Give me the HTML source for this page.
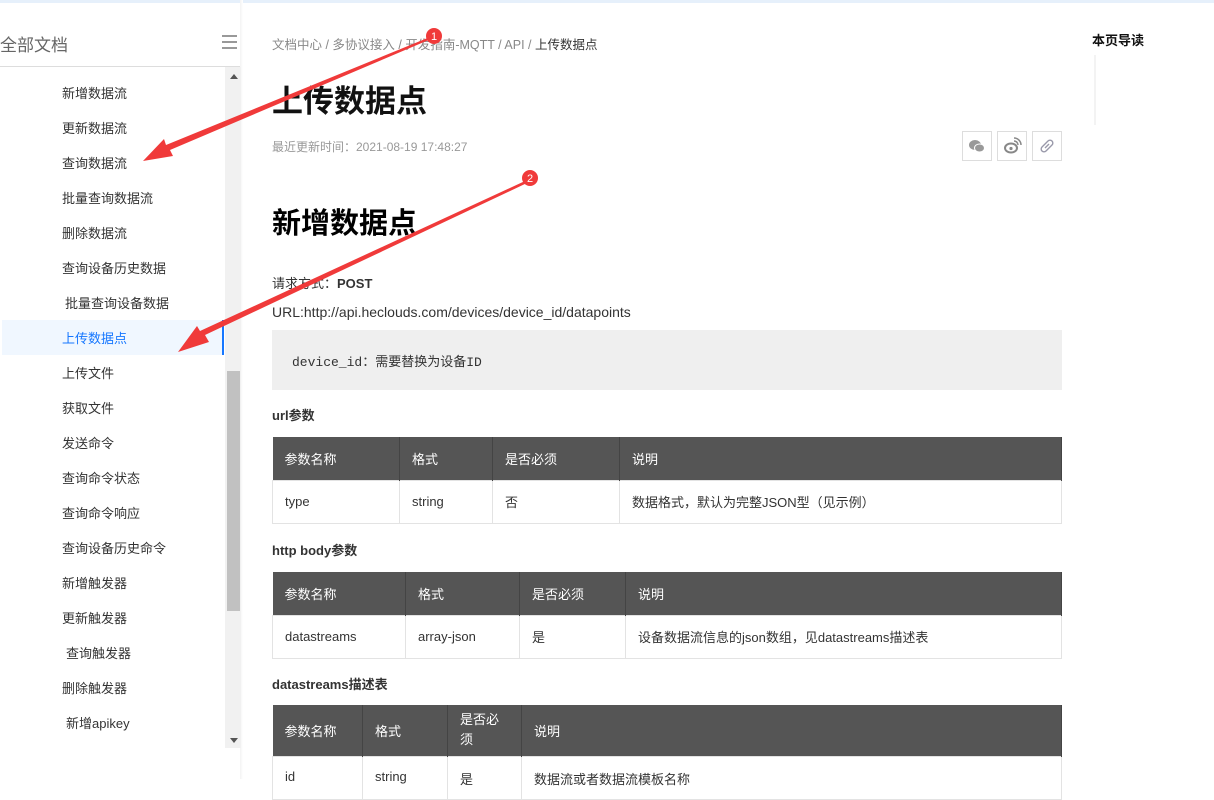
<!DOCTYPE html>
<html><head><meta charset="utf-8"><style>
*{margin:0;padding:0;box-sizing:border-box}
body{width:1214px;height:779px;overflow:hidden;background:#fff;font-family:"Liberation Sans","Noto Sans CJK SC",sans-serif;position:relative;color:#333}
.a{position:absolute;white-space:nowrap}
.nav{font-size:13px;color:#333}
table{position:absolute;border-collapse:collapse;font-size:13px;left:272px;width:790px}
th{background:#555;color:#fff;font-weight:normal;text-align:left;padding-left:12px;border-right:1px solid #444}
td{padding-left:12px;border:1px solid #e3e3e3;color:#333}
.ic{position:absolute;top:131px;width:30px;height:30px;border:1px solid #ddd;background:#fff}
</style></head><body>
<div class="a" style="left:0;top:0;width:1214px;height:3px;background:#e6f0fb"></div>
<div class="a" style="left:0;top:31px;font-size:17px;color:#666">全部文档</div>
<div class="a" style="left:222px;top:35px;width:15px;height:2px;background:#999;box-shadow:0 6px 0 #999,0 12px 0 #999"></div>
<div class="a" style="left:0;top:66px;width:241px;height:1px;background:#ddd"></div>
<div class="a" style="left:240px;top:0;width:3px;height:779px;background:linear-gradient(90deg,#f3f3f3,#fff)"></div>
<div class="a" style="left:225px;top:67px;width:16px;height:681px;background:#f1f1f1"></div>
<div class="a" style="left:227px;top:371px;width:13px;height:240px;background:#c1c1c1"></div>
<div class="a" style="left:230px;top:74px;width:0;height:0;border-left:4px solid transparent;border-right:4px solid transparent;border-bottom:5px solid #555"></div>
<div class="a" style="left:230px;top:738px;width:0;height:0;border-left:4px solid transparent;border-right:4px solid transparent;border-top:5px solid #555"></div>
<div class="a" style="left:2px;top:320px;width:222px;height:35px;background:#f0f7ff"></div>
<div class="a" style="left:222px;top:320px;width:2px;height:35px;background:#1677ff"></div>
<div class="a nav" style="left:62px;top:83px">新增数据流</div>
<div class="a nav" style="left:62px;top:118px">更新数据流</div>
<div class="a nav" style="left:62px;top:153px">查询数据流</div>
<div class="a nav" style="left:62px;top:188px">批量查询数据流</div>
<div class="a nav" style="left:62px;top:223px">删除数据流</div>
<div class="a nav" style="left:62px;top:258px">查询设备历史数据</div>
<div class="a nav" style="left:65px;top:293px">批量查询设备数据</div>
<div class="a nav" style="left:62px;top:328px;color:#1677ff">上传数据点</div>
<div class="a nav" style="left:62px;top:363px">上传文件</div>
<div class="a nav" style="left:62px;top:398px">获取文件</div>
<div class="a nav" style="left:62px;top:433px">发送命令</div>
<div class="a nav" style="left:62px;top:468px">查询命令状态</div>
<div class="a nav" style="left:62px;top:503px">查询命令响应</div>
<div class="a nav" style="left:62px;top:538px">查询设备历史命令</div>
<div class="a nav" style="left:62px;top:573px">新增触发器</div>
<div class="a nav" style="left:62px;top:608px">更新触发器</div>
<div class="a nav" style="left:66px;top:643px">查询触发器</div>
<div class="a nav" style="left:62px;top:678px">删除触发器</div>
<div class="a nav" style="left:66px;top:713px">新增apikey</div>

<div class="a" style="left:272px;top:34px;font-size:12.5px;color:#888">文档中心 / 多协议接入 / 开发指南-MQTT / API / <span style="color:#333">上传数据点</span></div>
<div class="a" style="left:272px;top:76px;font-size:31px;font-weight:bold;color:#111">上传数据点</div>
<div class="a" style="left:272px;top:138px;font-size:12px;color:#999">最近更新时间：2021-08-19 17:48:27</div>
<div class="ic" style="left:962px"><svg width="28" height="28" viewBox="0 0 28 28"><ellipse cx="12" cy="13" rx="6" ry="5" fill="#999"/><ellipse cx="16.5" cy="16" rx="5" ry="4" fill="#999" stroke="#fff" stroke-width="1"/></svg></div>
<div class="ic" style="left:997px"><svg width="28" height="28" viewBox="0 0 28 28"><ellipse cx="13" cy="16" rx="6" ry="4.5" fill="none" stroke="#888" stroke-width="2"/><circle cx="13" cy="16.5" r="1.6" fill="#888"/><path d="M16 9a4 4 0 0 1 4 4M16 6a7 7 0 0 1 7 7" stroke="#888" fill="none" stroke-width="1.5"/></svg></div>
<div class="ic" style="left:1032px"><svg width="28" height="28" viewBox="0 0 28 28"><path d="M12 12l-3 3a2.5 2.5 0 0 0 4 4l3-3M16 16l3-3a2.5 2.5 0 0 0-4-4l-3 3M12 16l4-4" stroke="#99a" fill="none" stroke-width="1.4"/></svg></div>
<div class="a" style="left:1092px;top:30px;font-size:13px;font-weight:bold;color:#111">本页导读</div>
<div class="a" style="left:1094px;top:55px;width:2px;height:70px;background:#f3f3f3"></div>

<div class="a" style="left:272px;top:200px;font-size:29px;font-weight:bold;color:#000">新增数据点</div>
<div class="a" style="left:272px;top:273px;font-size:13px">请求方式：<b>POST</b></div>
<div class="a" style="left:272px;top:304px;font-size:14px">URL:http://api.heclouds.com/devices/device_id/datapoints</div>
<div class="a" style="left:272px;top:330px;width:790px;height:60px;background:#efefef"></div>
<div class="a" style="left:292px;top:351px;font-size:13px;font-family:'Liberation Mono','Noto Sans CJK SC',monospace;color:#333">device_id：需要替换为设备ID</div>
<div class="a" style="left:272px;top:405px;font-size:13px;font-weight:bold">url参数</div>
<table style="top:437px"><tr style="height:43px"><th style="width:127px">参数名称</th><th style="width:93px">格式</th><th style="width:127px">是否必须</th><th>说明</th></tr><tr style="height:43px"><td>type</td><td>string</td><td>否</td><td>数据格式，默认为完整JSON型（见示例）</td></tr></table>
<div class="a" style="left:272px;top:540px;font-size:13px;font-weight:bold">http body参数</div>
<table style="top:572px"><tr style="height:43px"><th style="width:133px">参数名称</th><th style="width:114px">格式</th><th style="width:106px">是否必须</th><th>说明</th></tr><tr style="height:43px"><td>datastreams</td><td>array-json</td><td>是</td><td>设备数据流信息的json数组，见datastreams描述表</td></tr></table>
<div class="a" style="left:272px;top:674px;font-size:13px;font-weight:bold">datastreams描述表</div>
<table style="top:705px"><tr style="height:51px"><th style="width:90px">参数名称</th><th style="width:85px">格式</th><th style="width:74px;line-height:20px">是否必<br>须</th><th>说明</th></tr><tr style="height:43px"><td style="vertical-align:top;padding-top:12px">id</td><td style="vertical-align:top;padding-top:12px">string</td><td style="vertical-align:top;padding-top:12px">是</td><td style="vertical-align:top;padding-top:12px">数据流或者数据流模板名称</td></tr></table>

<svg class="a" style="left:0;top:0" width="1214" height="779">
<path d="M430 37 L431 39 L170 150 L173 156 L143 161 L164 139 L166 145 Z" fill="#f03a3a"/>
<path d="M525 181 L527 183 L205 335 L209 342 L178 352 L197 326 L200 331 Z" fill="#f03a3a"/>
<circle cx="434" cy="36" r="8" fill="#f03a3a"/><text x="434" y="40" font-size="11" fill="#fff" text-anchor="middle" font-family="Liberation Sans">1</text>
<circle cx="530" cy="178" r="8" fill="#f03a3a"/><text x="530" y="182" font-size="11" fill="#fff" text-anchor="middle" font-family="Liberation Sans">2</text>
</svg>
</body></html>
